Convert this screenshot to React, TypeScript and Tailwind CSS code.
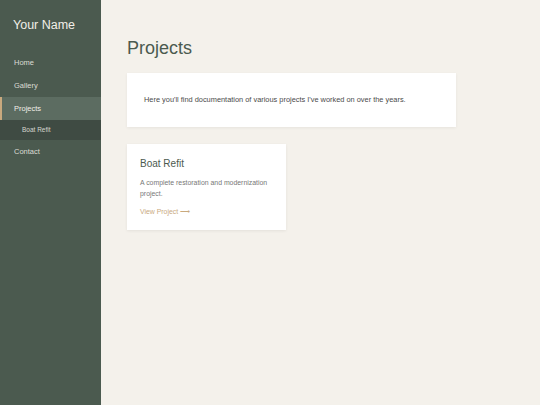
import { FC } from "react";

const navItems = [
  { label: "Home" },
  { label: "Gallery" },
  { label: "Projects", active: true },
];

const App: FC = () => {
  return (
    <div
      className="flex h-[405px] w-[540px] bg-[#f4f1eb]"
      style={{ fontFamily: '"Liberation Sans", Arial, sans-serif' }}
    >
      {/* Sidebar */}
      <aside className="flex w-[101px] shrink-0 flex-col bg-[#4b5a4f]">
        <div className="px-[13px] pt-[18px] pb-[19px] text-[12.5px] leading-[14px] text-[#f1eee7]">
          Your Name
        </div>
        <nav className="flex flex-col">
          {navItems.map((item) =>
            item.active ? (
              <a
                key={item.label}
                className="flex h-[23px] items-center border-l-2 border-[#c9a97e] bg-[#5c6c61] pl-[12px] text-[7.5px] text-[#f1eee7]"
              >
                {item.label}
              </a>
            ) : (
              <a
                key={item.label}
                className="flex h-[23px] items-center pl-[14px] text-[7.5px] text-[#dcdcd4]"
              >
                {item.label}
              </a>
            )
          )}
          <a className="flex h-[20px] items-center bg-[#3f4b43] pl-[22px] text-[6.5px] text-[#d6d6ce]">
            Boat Refit
          </a>
          <a className="flex h-[23px] items-center pl-[14px] text-[7.5px] text-[#dcdcd4]">
            Contact
          </a>
        </nav>
      </aside>

      {/* Main */}
      <main className="flex flex-1 flex-col pl-[26px] pr-[84px] pt-[38px]">
        <h1 className="text-[18px] leading-[20px] text-[#4b5a4f]">Projects</h1>
        <div className="mt-[15px] flex h-[54px] items-center bg-white px-[17px] shadow-[0_1px_3px_rgba(0,0,0,0.06)]">
          <p className="text-[7.4px] text-[#4a4a4a]">
            Here you'll find documentation of various projects I've worked on over the years.
          </p>
        </div>

        <div className="mt-[17px] w-[159px] bg-white px-[13px] pt-[14px] pb-[13px] shadow-[0_1px_3px_rgba(0,0,0,0.07)]">
          <h2 className="text-[10px] leading-[12px] text-[#4b5a4f]">Boat Refit</h2>
          <p className="mt-[7px] text-[6.9px] leading-[11px] text-[#777]">
            A complete restoration and modernization project.
          </p>
          <a className="mt-[8px] block text-[6.9px] leading-[10px] text-[#c9a97e]">
            View Project ⟶
          </a>
        </div>
      </main>
    </div>
  );
};

export default App;
